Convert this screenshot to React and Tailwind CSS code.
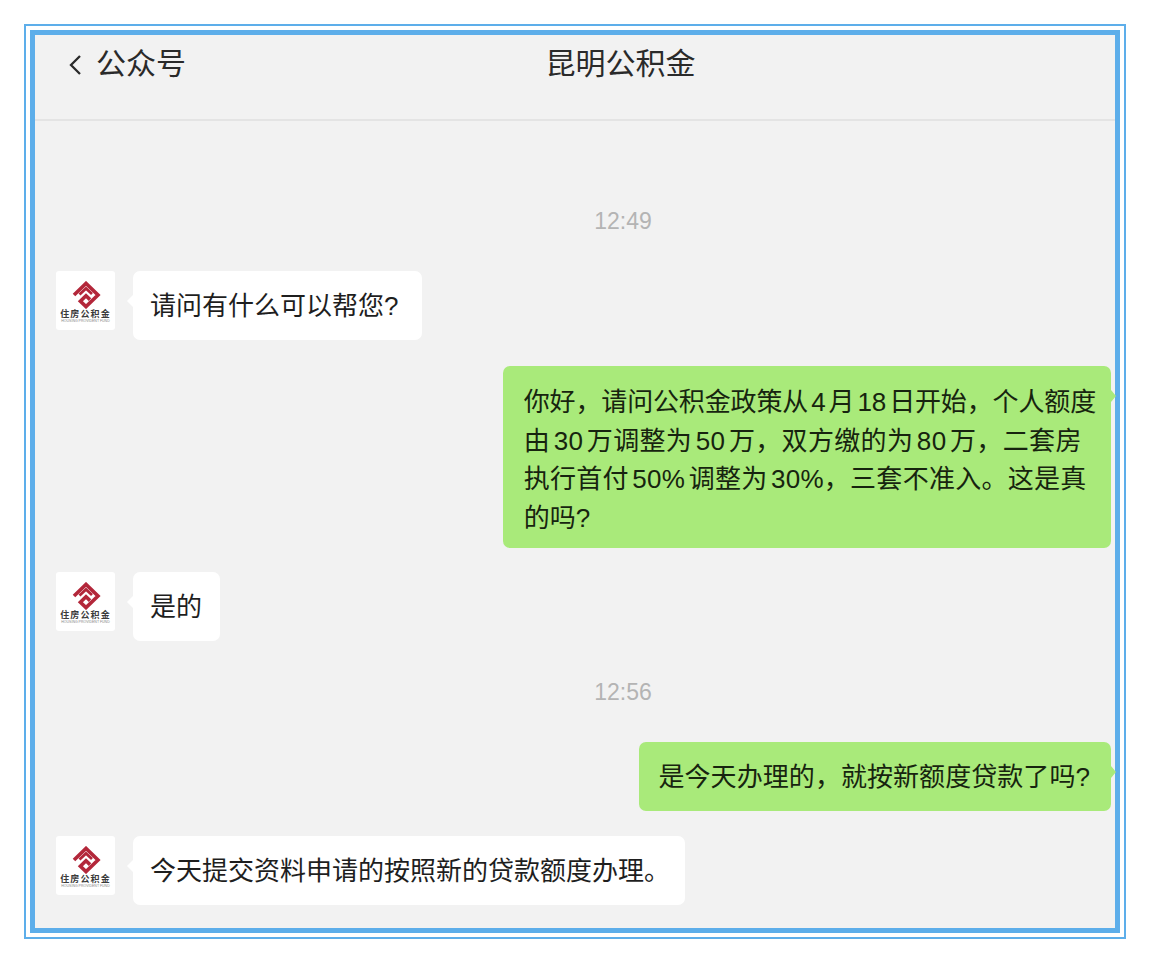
const FONT = { fontFamily: '"Liberation Sans", "Noto Sans CJK SC", sans-serif' };
const C = "\uFF0C";

function Logo() {
  return (
    <div className="w-[59px] h-[59px] bg-white rounded-[3px] shrink-0 flex flex-col items-center pt-[10px]">
      <svg width="30" height="28" viewBox="0 0 30 28" fill="none">
        <path d="M3 14 L15 2.4 L27 14 L15 25.6 L9.4 20.2 L15 14.8 L19 18.6" stroke="#b3273a" strokeWidth="3.6" />
        <path d="M8.5 13.5 L15 7.4 L21 13" stroke="#b3273a" strokeWidth="2.8" />
      </svg>
      <div className="text-[9px] leading-[10px] tracking-[1.1px] font-bold text-[#3a3a3a] whitespace-nowrap">住房公积金</div>
      <div className="text-[3.5px] leading-[5px] text-[#888] whitespace-nowrap">HOUSING PROVIDENT FUND</div>
    </div>
  );
}

function Left({ children, className }) {
  return (
    <div className="flex items-start pl-[21px]">
      <Logo />
      <div className={`relative ml-[18px] bg-white rounded-[7px] h-[69px] flex items-center text-[26px] text-[#1e1e1e] whitespace-nowrap ${className}`}>
        <span className="absolute left-[-6px] top-[24px] w-0 h-0 border-y-[6px] border-y-transparent border-r-[6px] border-r-white" />
        <span className="relative top-[1px]">{children}</span>
      </div>
    </div>
  );
}

function Right({ children, className }) {
  return (
    <div className="flex justify-end pr-[4px]">
      <div className={`relative bg-[#a9ea7a] rounded-[7px] text-[26px] text-[#17240f] whitespace-nowrap [word-spacing:-4px] ${className}`}>
        <span className="absolute right-[-5px] top-[24px] w-0 h-0 border-y-[6px] border-y-transparent border-l-[5px] border-l-[#a9ea7a]" />
        {children}
      </div>
    </div>
  );
}

function Time({ children, className }) {
  return (
    <div className={`text-center text-[23px] leading-[26px] text-[#b4b4b4] pl-[96px] ${className}`}>{children}</div>
  );
}

export default function App() {
  return (
    <div className="bg-white w-[1150px] h-[963px] pt-[24px] pl-[24px]" style={FONT}>
      <div className="w-[1102px] h-[915px] border-2 border-[#5daeea] p-[4px]">
        <div className="w-full h-full border-[5px] border-[#5daeea] bg-[#f2f2f2] flex flex-col">
          <div className="relative h-[86px] shrink-0 border-b-2 border-[#e4e4e4] flex justify-center pt-[9px] text-[30px] leading-[40px] text-[#2a2a2a]">
            <div className="absolute left-[32px] top-[9px] flex items-center">
              <svg width="16" height="24" viewBox="0 0 16 24" fill="none" className="mr-[13px]">
                <path d="M13 4 L4 13 L13 22" stroke="#2a2a2a" strokeWidth="2.3" />
              </svg>
              公众号
            </div>
            <span className="ml-[91px]">昆明公积金</span>
          </div>
          <Time className="mt-[87px]">12:49</Time>
          <div className="mt-[37px]"><Left className="pl-[17px] pr-[24px]">请问有什么可以帮您?</Left></div>
          <div className="mt-[26px]">
            <Right className="pl-[21px] pr-[15px] pt-[17px] pb-[10px] leading-[38.7px]">
              <div className="tracking-[-0.15px]">你好{C}请问公积金政策从 4 月 18 日开始{C}个人额度</div>
              <div className="tracking-[0.34px]">由 30 万调整为 50 万{C}双方缴的为 80 万{C}二套房</div>
              <div className="tracking-[0.27px]">执行首付 50% 调整为 30%{C}三套不准入。这是真</div>
              <div>的吗?</div>
            </Right>
          </div>
          <div className="mt-[24px]"><Left className="pl-[17px] pr-[18px]">是的</Left></div>
          <Time className="mt-[38px]">12:56</Time>
          <div className="mt-[37px]">
            <Right className="h-[69px] flex items-center pl-[20px] pr-[21px] tracking-[0.06px]">
              <span className="relative top-[1px]">是今天办理的{C}就按新额度贷款了吗?</span>
            </Right>
          </div>
          <div className="mt-[25px]"><Left className="pl-[17px] pr-[15px]">今天提交资料申请的按照新的贷款额度办理。</Left></div>
        </div>
      </div>
    </div>
  );
}
